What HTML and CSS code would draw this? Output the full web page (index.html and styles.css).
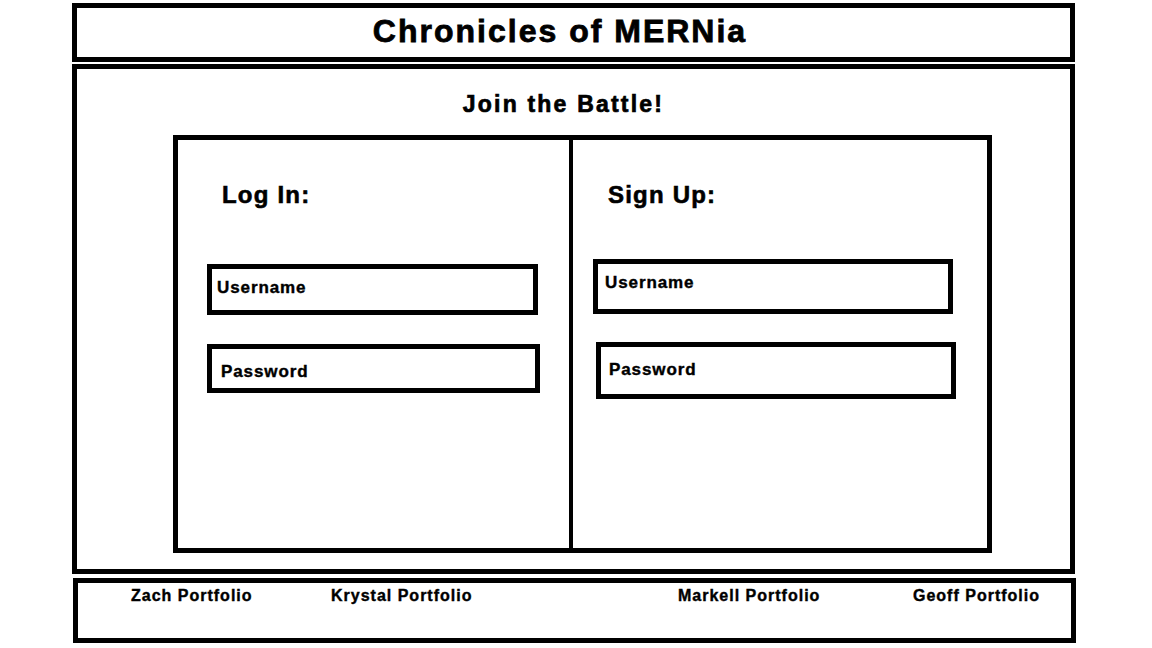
FILE: index.html
```html
<!DOCTYPE html>
<html lang="en">
<head>
<meta charset="utf-8">
<title>Chronicles of MERNia</title>
<link rel="stylesheet" href="styles.css">
</head>
<body>
<div class="page">
  <header class="banner">
    <h1 class="title">Chronicles of MERNia</h1>
  </header>
  <main class="stage">
    <h2 class="join">Join the Battle!</h2>
    <section class="auth">
      <div class="panel panel-login">
        <h3 class="panel-title">Log In:</h3>
        <div class="field field-user">Username</div>
        <div class="field field-pass">Password</div>
      </div>
      <div class="panel panel-signup">
        <h3 class="panel-title">Sign Up:</h3>
        <div class="field field-user">Username</div>
        <div class="field field-pass">Password</div>
      </div>
    </section>
  </main>
  <footer class="links">
    <a class="link" href="#">Zach Portfolio</a>
    <a class="link" href="#">Krystal Portfolio</a>
    <a class="link" href="#">Markell Portfolio</a>
    <a class="link" href="#">Geoff Portfolio</a>
  </footer>
</div>
</body>
</html>
```

FILE: styles.css
```css
* {
  box-sizing: border-box;
}

html, body {
  margin: 0;
  padding: 0;
  background: #ffffff;
}

body {
  font-family: "Liberation Sans", Arial, sans-serif;
  font-weight: bold;
  color: #000000;
}

.page {
  width: 1004px;
  margin-left: 72px;
  padding-top: 3px;
  display: flex;
  flex-direction: column;
}

/* Header banner */
.banner {
  width: 1003px;
  height: 59px;
  border: 5px solid #000;
  padding: 7px 27px 0 0;
  text-align: center;
}

.title {
  margin: 0;
  font-size: 32px;
  line-height: 1;
  letter-spacing: 2px;
  font-weight: bold;
  -webkit-text-stroke: 0.8px #000;
}

/* Main stage */
.stage {
  width: 1003px;
  height: 510px;
  margin-top: 2px;
  border: 5px solid #000;
  padding-top: 24px;
  display: flex;
  flex-direction: column;
}

.join {
  margin: 0;
  padding-right: 20px;
  text-align: center;
  font-size: 23px;
  line-height: 1;
  letter-spacing: 2.2px;
  font-weight: bold;
  -webkit-text-stroke: 0.7px #000;
}

.auth {
  width: 819px;
  height: 418px;
  margin: 19px 0 0 96px;
  border: 5px solid #000;
  display: flex;
}

.panel {
  display: flex;
  flex-direction: column;
  align-items: flex-start;
}

.panel-login {
  width: 391px;
}

.panel-signup {
  flex: 1;
  border-left: 4px solid #000;
}

.panel-title {
  margin: 43px 0 0 0;
  font-size: 24px;
  line-height: 1;
  letter-spacing: 1.2px;
  font-weight: bold;
  -webkit-text-stroke: 0.6px #000;
}

.panel-login .panel-title {
  margin-left: 44px;
}

.panel-signup .panel-title {
  margin-left: 35px;
}

.field {
  border: 5px solid #000;
  font-size: 17px;
  line-height: 1;
  letter-spacing: 0.9px;
  -webkit-text-stroke: 0.4px #000;
}

.panel-login .field-user {
  margin: 57px 0 0 29px;
  width: 331px;
  height: 51px;
  padding: 10px 0 0 5px;
}

.panel-login .field-pass {
  margin: 29px 0 0 29px;
  width: 333px;
  height: 49px;
  padding: 14px 0 0 9px;
}

.panel-signup .field-user {
  margin: 52px 0 0 20px;
  width: 360px;
  height: 55px;
  padding: 10px 0 0 7px;
}

.panel-signup .field-pass {
  margin: 28px 0 0 23px;
  width: 360px;
  height: 57px;
  padding: 14px 0 0 8px;
}

/* Footer */
.links {
  width: 1003px;
  height: 65px;
  margin: 4px 0 0 1px;
  border: 5px solid #000;
  padding: 5px 0 0 53px;
  display: grid;
  grid-template-columns: 200px 347px 235px auto;
  align-items: start;
}

.link {
  color: #000;
  text-decoration: none;
  font-size: 16px;
  line-height: 1;
  letter-spacing: 1px;
  -webkit-text-stroke: 0.4px #000;
}
```
